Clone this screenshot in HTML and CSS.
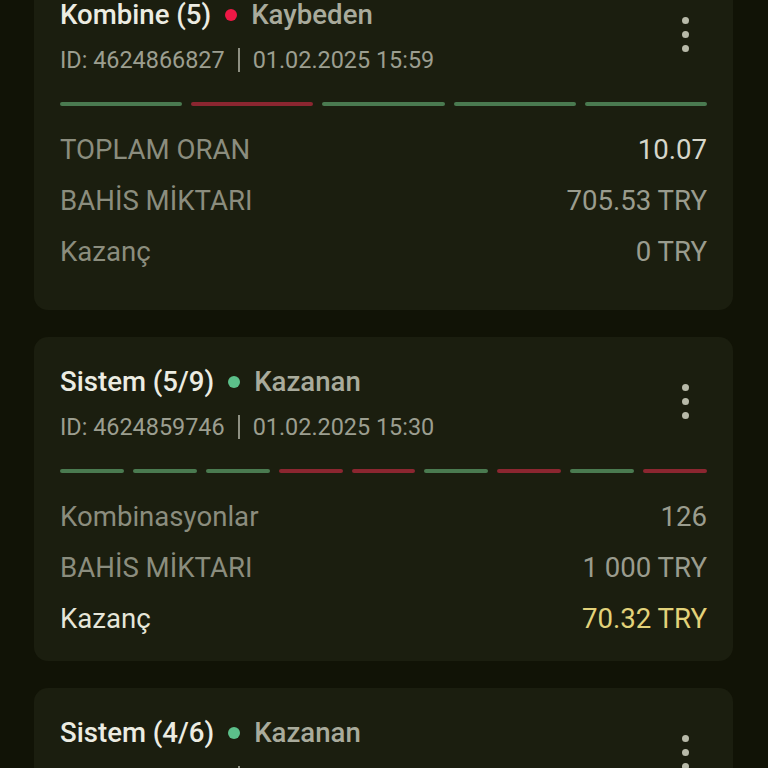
FILE: index.html
```html
<!DOCTYPE html>
<html lang="tr">
<head>
<meta charset="utf-8">
<link rel="stylesheet" href="styles.css">
</head>
<body>
<div class="list">
  <div class="card">
    <div class="head">
      <div class="head-text">
        <div class="title"><span class="name">Kombine (5)</span><span class="dot lost"></span><span class="status">Kaybeden</span></div>
        <div class="meta"><span>ID: 4624866827</span><span class="sep"></span><span>01.02.2025 15:59</span></div>
      </div>
      <div class="menu"><i></i><i></i><i></i></div>
    </div>
    <div class="bars">
      <span class="g"></span><span class="r"></span><span class="g"></span><span class="g"></span><span class="g"></span>
    </div>
    <div class="rows rows-tall">
      <div class="row"><span class="label">TOPLAM ORAN</span><span class="value bright">10.07</span></div>
      <div class="row"><span class="label">BAHİS MİKTARI</span><span class="value">705.53 TRY</span></div>
      <div class="row"><span class="label">Kazanç</span><span class="value">0 TRY</span></div>
    </div>
  </div>

  <div class="card">
    <div class="head">
      <div class="head-text">
        <div class="title"><span class="name">Sistem (5/9)</span><span class="dot won"></span><span class="status">Kazanan</span></div>
        <div class="meta"><span>ID: 4624859746</span><span class="sep"></span><span>01.02.2025 15:30</span></div>
      </div>
      <div class="menu"><i></i><i></i><i></i></div>
    </div>
    <div class="bars">
      <span class="g"></span><span class="g"></span><span class="g"></span><span class="r"></span><span class="r"></span><span class="g"></span><span class="r"></span><span class="g"></span><span class="r"></span>
    </div>
    <div class="rows">
      <div class="row"><span class="label">Kombinasyonlar</span><span class="value">126</span></div>
      <div class="row"><span class="label">BAHİS MİKTARI</span><span class="value">1 000 TRY</span></div>
      <div class="row"><span class="label light">Kazanç</span><span class="value gold">70.32 TRY</span></div>
    </div>
  </div>

  <div class="card">
    <div class="head">
      <div class="head-text">
        <div class="title"><span class="name">Sistem (4/6)</span><span class="dot won"></span><span class="status">Kazanan</span></div>
        <div class="meta"><span>ID: 4624851102</span><span class="sep"></span><span>01.02.2025 15:12</span></div>
      </div>
      <div class="menu"><i></i><i></i><i></i></div>
    </div>
  </div>
</div>
</body>
</html>
```

FILE: styles.css
```css
html, body {
  margin: 0;
  padding: 0;
  background: #111306;
  height: 768px;
  overflow: hidden;
}
body {
  font-family: Roboto, "Liberation Sans", sans-serif;
}
.list {
  display: flex;
  flex-direction: column;
  gap: 27px;
  padding: 0 35px 0 34px;
  margin-top: -30px;
}
.card {
  background: #1b1e0f;
  border-radius: 14px;
  padding: 28px 26px 0 26px;
}
.head {
  display: flex;
  justify-content: space-between;
  align-items: flex-start;
}
.title {
  display: flex;
  align-items: center;
  font-size: 27.6px;
  line-height: 34px;
  font-weight: 500;
}
.name { color: #ecece2; }
.status { color: #a9ab9c; }
.dot {
  width: 12px;
  height: 12px;
  border-radius: 50%;
  margin: 0 14px 0 14px;
}
.dot.lost { background: #ee1845; }
.dot.won { background: #5cc08a; }
.meta {
  display: flex;
  align-items: center;
  margin-top: 15px;
  font-size: 23.4px;
  line-height: 26px;
  color: #9c9e90;
}
.sep {
  width: 2px;
  height: 24px;
  background: #8e9082;
  margin: 0 13px 0 13px;
}
.menu {
  display: flex;
  flex-direction: column;
  gap: 7px;
  margin-top: 19px;
  margin-right: 18px;
}
.menu i {
  display: block;
  width: 7px;
  height: 7px;
  border-radius: 50%;
  background: #b8baa9;
}
.bars {
  display: flex;
  gap: 9px;
  margin-top: 29px;
}
.bars span {
  flex: 1;
  height: 4px;
  border-radius: 2px;
}
.bars .g { background: #4a7a50; }
.bars .r { background: #8b2630; }
.rows {
  display: flex;
  flex-direction: column;
  padding: 17.5px 0 17.5px;
}
.rows.rows-tall {
  padding-bottom: 33.5px;
}
.row {
  display: flex;
  justify-content: space-between;
  align-items: center;
  height: 51px;
  font-size: 27.6px;
}
.label { color: #8b8d7e; }
.label.light { color: #e6e6da; }
.value { color: #9a9c8e; }
.value.bright { color: #d6d6ca; }
.value.gold { color: #e2d27a; }
```
